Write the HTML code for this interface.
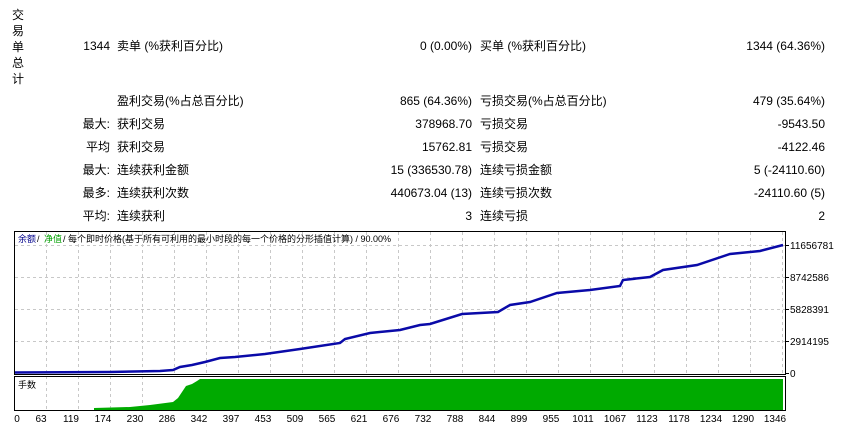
<!DOCTYPE html>
<html><head><meta charset="utf-8"><style>
body{margin:0;width:857px;height:432px;background:#fff;position:relative;overflow:hidden;font-family:"Liberation Sans","Noto Sans CJK SC",sans-serif;font-size:12px;color:#000}
.a{position:absolute;white-space:nowrap;line-height:14px}
.r{text-align:right}
</style></head><body>
<div class="a" style="left:12px;top:7px;width:14px;line-height:16px">交<br>易<br>单<br>总<br>计</div>
<div class="a r" style="left:40px;width:70px;top:39px">1344</div>
<div class="a" style="left:117px;top:39px">卖单 (%获利百分比)</div>
<div class="a r" style="left:300px;width:172px;top:39px">0 (0.00%)</div>
<div class="a" style="left:480px;top:39px">买单 (%获利百分比)</div>
<div class="a r" style="left:600px;width:225px;top:39px">1344 (64.36%)</div>

<div class="a" style="left:117px;top:94px">盈利交易(%占总百分比)</div>
<div class="a r" style="left:300px;width:172px;top:94px">865 (64.36%)</div>
<div class="a" style="left:480px;top:94px">亏损交易(%占总百分比)</div>
<div class="a r" style="left:600px;width:225px;top:94px">479 (35.64%)</div>

<div class="a r" style="left:40px;width:70px;top:117px">最大:</div>
<div class="a" style="left:117px;top:117px">获利交易</div>
<div class="a r" style="left:300px;width:172px;top:117px">378968.70</div>
<div class="a" style="left:480px;top:117px">亏损交易</div>
<div class="a r" style="left:600px;width:225px;top:117px">-9543.50</div>

<div class="a r" style="left:40px;width:70px;top:140px">平均</div>
<div class="a" style="left:117px;top:140px">获利交易</div>
<div class="a r" style="left:300px;width:172px;top:140px">15762.81</div>
<div class="a" style="left:480px;top:140px">亏损交易</div>
<div class="a r" style="left:600px;width:225px;top:140px">-4122.46</div>

<div class="a r" style="left:40px;width:70px;top:163px">最大:</div>
<div class="a" style="left:117px;top:163px">连续获利金额</div>
<div class="a r" style="left:300px;width:172px;top:163px">15 (336530.78)</div>
<div class="a" style="left:480px;top:163px">连续亏损金额</div>
<div class="a r" style="left:600px;width:225px;top:163px">5 (-24110.60)</div>

<div class="a r" style="left:40px;width:70px;top:186px">最多:</div>
<div class="a" style="left:117px;top:186px">连续获利次数</div>
<div class="a r" style="left:300px;width:172px;top:186px">440673.04 (13)</div>
<div class="a" style="left:480px;top:186px">连续亏损次数</div>
<div class="a r" style="left:600px;width:225px;top:186px">-24110.60 (5)</div>

<div class="a r" style="left:40px;width:70px;top:209px">平均:</div>
<div class="a" style="left:117px;top:209px">连续获利</div>
<div class="a r" style="left:300px;width:172px;top:209px">3</div>
<div class="a" style="left:480px;top:209px">连续亏损</div>
<div class="a r" style="left:600px;width:225px;top:209px">2</div>

<svg style="position:absolute;left:0;top:0" width="857" height="432" font-family="Liberation Sans, Noto Sans CJK SC, sans-serif" font-size="10">
<g stroke="#c8c8c8" stroke-dasharray="3,3" stroke-width="1">
<path d="M46.5 232V374M78.5 232V374M110.5 232V374M142.5 232V374M174.5 232V374M206.5 232V374M238.5 232V374M270.5 232V374M302.5 232V374M334.5 232V374M366.5 232V374M398.5 232V374M430.5 232V374M462.5 232V374M494.5 232V374M526.5 232V374M558.5 232V374M590.5 232V374M622.5 232V374M654.5 232V374M686.5 232V374M718.5 232V374M750.5 232V374M782.5 232V374"/>
<path d="M46.5 376V410M78.5 376V410M110.5 376V410M142.5 376V410"/>
<path d="M15 245.5H785M15 277.5H785M15 309.5H785M15 341.5H785"/>
</g>
<polygon fill="#00aa00" points="94,410 94,408 130,407 150,405 173,402 178,398 182,392 186,386 192,384 197,381 200,379 783,379 783,410"/>
<polyline fill="none" stroke="#0a0aa8" stroke-width="2.5" points="15,372.5 110,372 160,371 173,370 180,367 192,365 205,362 220,358 235,357 265,354 300,349 340,343 345,339 370,333 400,330 420,325 430,324 462,314 498,312 510,305 530,302 557,293 590,290 620,286 623,280 650,277 663,270 697,265 730,254 760,251 783,245"/>
<rect x="14.5" y="231.5" width="771" height="143" fill="none" stroke="#000"/>
<rect x="14.5" y="376.5" width="771" height="34" fill="none" stroke="#000"/>
<g stroke="#000"><path d="M786 245.5h3M786 277.5h3M786 309.5h3M786 341.5h3M786 373.5h3"/></g>
<text x="18" y="242" fill="#00008b" font-size="9">余额</text>
<text x="37" y="242" fill="#000" font-size="9">/</text>
<text x="44" y="242" fill="#00a000" font-size="9">净值</text>
<text x="63" y="242" fill="#000" font-size="9">/ 每个即时价格(基于所有可利用的最小时段的每一个价格的分形插值计算) / 90.00%</text>
<text x="18" y="388" font-size="9">手数</text>
<g font-size="10" fill="#000">
<text x="790" y="249">11656781</text><text x="790" y="281">8742586</text><text x="790" y="313">5828391</text><text x="790" y="345">2914195</text><text x="790" y="377">0</text>
</g>
<g font-size="10" text-anchor="middle">
<text x="17" y="422">0</text><text x="41" y="422">63</text><text x="71" y="422">119</text><text x="103" y="422">174</text><text x="135" y="422">230</text><text x="167" y="422">286</text><text x="199" y="422">342</text><text x="231" y="422">397</text><text x="263" y="422">453</text><text x="295" y="422">509</text><text x="327" y="422">565</text><text x="359" y="422">621</text><text x="391" y="422">676</text><text x="423" y="422">732</text><text x="455" y="422">788</text><text x="487" y="422">844</text><text x="519" y="422">899</text><text x="551" y="422">955</text><text x="583" y="422">1011</text><text x="615" y="422">1067</text><text x="647" y="422">1123</text><text x="679" y="422">1178</text><text x="711" y="422">1234</text><text x="743" y="422">1290</text><text x="775" y="422">1346</text>
</g>
</svg>
</body></html>
